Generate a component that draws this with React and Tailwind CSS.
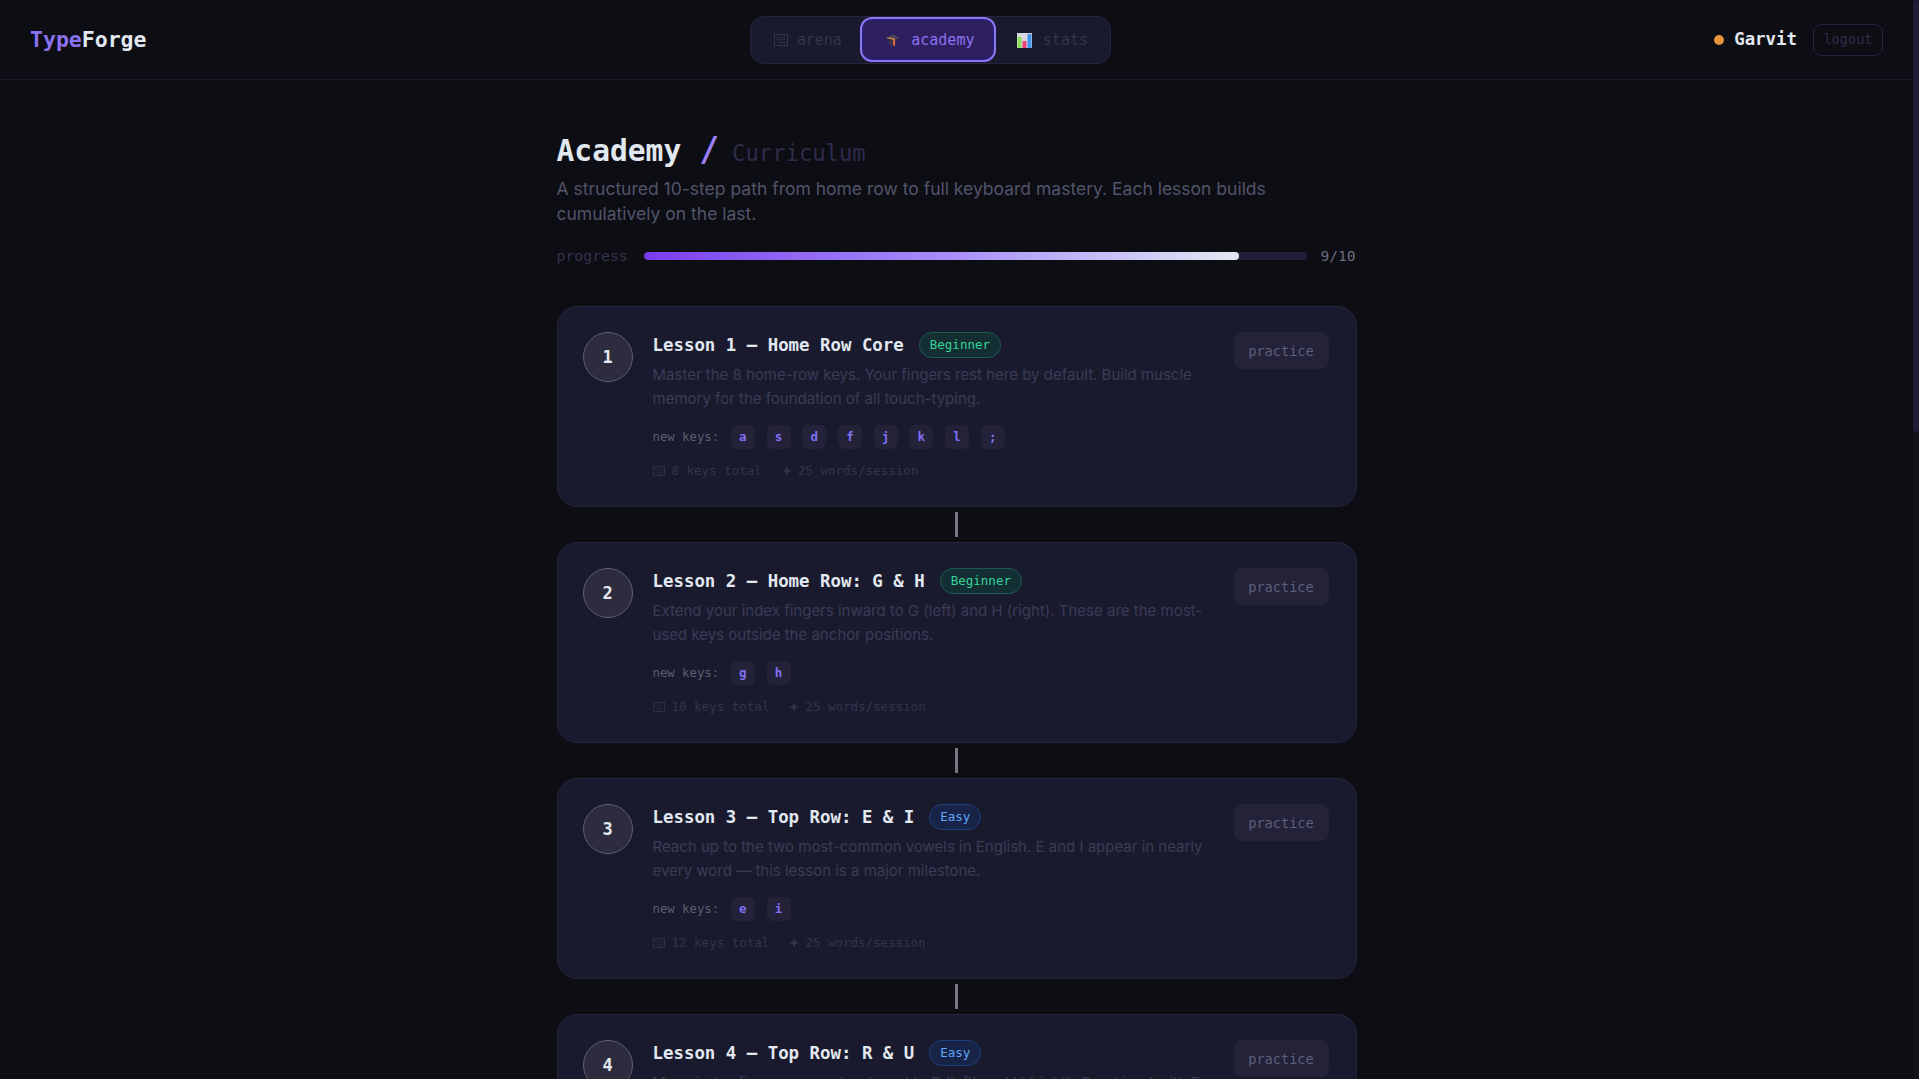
const mono = "font-['DejaVu_Sans_Mono','Liberation_Mono',monospace]";

const lessons = [
  { n: 1, title: "Lesson 1 — Home Row Core", level: "Beginner", desc: "Master the 8 home-row keys. Your fingers rest here by default. Build muscle memory for the foundation of all touch-typing.", keys: ["a", "s", "d", "f", "j", "k", "l", ";"], total: 8 },
  { n: 2, title: "Lesson 2 — Home Row: G & H", level: "Beginner", desc: "Extend your index fingers inward to G (left) and H (right). These are the most-used keys outside the anchor positions.", keys: ["g", "h"], total: 10 },
  { n: 3, title: "Lesson 3 — Top Row: E & I", level: "Easy", desc: "Reach up to the two most-common vowels in English. E and I appear in nearly every word — this lesson is a major milestone.", keys: ["e", "i"], total: 12 },
  { n: 4, title: "Lesson 4 — Top Row: R & U", level: "Easy", desc: "Move index fingers up-and-outward to R (left) and U (right). Combined with E and I, this unlocks many common words.", keys: ["r", "u"], total: 14 },
];

const levelStyles = {
  Beginner: "text-[#34d399] bg-[#142f33] border-[#1d5a50]",
  Easy: "text-[#60a5fa] bg-[#172448] border-[#1e3f78]",
};

function KeyboardIcon({ className }) {
  return (
    <svg viewBox="0 0 14 12" className={className} fill="none" stroke="currentColor">
      <rect x="0.5" y="0.5" width="13" height="11" strokeWidth="1" />
      <path d="M2 3.5h10M2 5.5h10" strokeWidth="1" strokeDasharray="1 1" />
      <path d="M4 8.5h7" strokeWidth="1" />
    </svg>
  );
}

function CapIcon() {
  return (
    <svg viewBox="0 0 14 14" className="w-[16px] h-[16px]">
      <path d="M1 5l6-3 6 3-6 2.5z" fill="#4a4458" />
      <path d="M3.5 7v3.5l3.5 1.5V7.5z" fill="#3a3548" />
      <path d="M2 5l6 1.2" stroke="#e8923a" strokeWidth="1" fill="none" />
      <path d="M8 6v6" stroke="#e8743a" strokeWidth="1.6" />
    </svg>
  );
}

function StatsIcon() {
  return (
    <svg viewBox="0 0 15 15" className="w-[15px] h-[15px]">
      <rect width="15" height="15" fill="#d8d8de" />
      <rect x="0.5" y="4" width="4" height="11" fill="#8fe35a" />
      <rect x="5.5" y="8" width="4" height="7" fill="#ee3f78" />
      <rect x="10.5" y="1" width="4" height="14" fill="#3f93e8" />
    </svg>
  );
}

function Lesson({ l }) {
  return (
    <div className="flex items-start gap-[20px] bg-[#1a1a2e] border border-[#25233f] rounded-[20px] pt-[25px] pl-[25px] pr-[27px] h-[201px]">
      <div className={`${mono} w-[50px] h-[50px] shrink-0 rounded-full bg-[#2c2c3e] border border-[#5e5e6e] flex items-center justify-center pt-[2px] text-[17px] font-bold text-[#e2e8f0]`}>
        {l.n}
      </div>
      <div className="flex-1 min-w-0">
        <div className="flex items-center gap-[15px] h-[26px]">
          <span className={`${mono} text-[17.4px] font-bold text-[#e2e8f0]`}>{l.title}</span>
          <span className={`${mono} ${levelStyles[l.level]} border rounded-full h-[26px] px-[10px] flex items-center text-[12.5px]`}>{l.level}</span>
        </div>
        <p className="font-['Inter',sans-serif] mt-[5px] text-[15px] leading-[24px] text-[#3b3b56]">{l.desc}</p>
        <div className="flex items-center gap-[11.7px] mt-[14px] h-[24px]">
          <span className={`${mono} text-[12.3px] text-[#5c5c72]`}>new keys:</span>
          {l.keys.map((k) => (
            <span key={k} className={`${mono} w-[24px] h-[24px] rounded-[6px] bg-[#232238] flex items-center justify-center text-[12.5px] font-bold text-[#8070f5]`}>{k}</span>
          ))}
        </div>
        <div className={`${mono} flex items-center gap-[20px] mt-[13px] text-[12.5px] text-[#34334c]`}>
          <span className="flex items-center gap-[7px]">
            <KeyboardIcon className="w-[12px] h-[10px]" />
            {l.total} keys total
          </span>
          <span className="flex items-center gap-[6px]">
            <svg viewBox="0 0 10 10" className="w-[10px] h-[10px]" fill="currentColor">
              <path d="M5 0l1.2 3.8L10 5 6.2 6.2 5 10 3.8 6.2 0 5l3.8-1.2z" />
            </svg>
            25 words/session
          </span>
        </div>
      </div>
      <button className={`${mono} shrink-0 w-[95px] h-[37px] pt-[2px] rounded-[8px] bg-[#232238] text-[13.6px] text-[#5f5f78]`}>practice</button>
    </div>
  );
}

export default function App() {
  return (
    <div className="flex h-screen overflow-hidden bg-[#0d0d14]">
      <div className="flex-1 min-w-0">
        <header className="bg-[#0d0d14] border-b border-[#1a1a2e] h-[80px] px-[30px] flex items-center justify-between">
          <div className={`${mono} text-[21.5px] font-bold pt-[1px]`}>
            <span className="text-[#8b72f0]">Type</span>
            <span className="text-[#e2e8f0]">Forge</span>
          </div>
          <nav className={`${mono} h-[48px] flex items-center gap-[4px] px-[5px] rounded-[14px] bg-[#1a1a2e] border border-[#25233f] text-[15px]`}>
            <button className="flex items-center gap-[9px] h-[44px] pt-[1px] pl-[18px] pr-[14px] text-[#34334c]">
              <KeyboardIcon className="w-[14px] h-[12px]" />
              arena
            </button>
            <button className="flex items-center gap-[10px] w-[136px] justify-center h-[45px] pt-[1px] pl-[4px] rounded-[12px] border-2 border-[#8b76f5] bg-[#2e1f5e] text-[#8b72f0] shadow-[inset_0_0_0_2px_#2a1f70]">
              <CapIcon />
              academy
            </button>
            <button className="flex items-center gap-[11px] h-[44px] pt-[1px] pl-[17px] pr-[17px] text-[#34334c]">
              <StatsIcon />
              stats
            </button>
          </nav>
          <div className="flex items-center">
            <span className="w-[10px] h-[10px] rounded-full bg-[#e8923a]"></span>
            <span className={`${mono} ml-[10px] text-[17.4px] font-bold text-[#e2e8f0]`}>Garvit</span>
            <button className={`${mono} ml-[16px] w-[70px] h-[32px] rounded-[8px] border border-[#25233f] text-[13.6px] text-[#2e2d48]`}>logout</button>
          </div>
        </header>
        <main className="w-[800px] mx-auto pt-[45px]">
          <h1 className={`${mono} flex items-baseline h-[46px] text-[29.6px] font-bold text-[#e2e8f0]`}>
            Academy
            <span className="ml-[18px] text-[33px] text-[#9a80f8]">/</span>
            <span className="ml-[13px] text-[22.2px] font-normal text-[#2e2b4a]">Curriculum</span>
          </h1>
          <p className="font-['Inter',sans-serif] mt-[5px] text-[17.5px] leading-[25px] text-[#52546a] w-[730px]">
            A structured 10-step path from home row to full keyboard mastery. Each lesson builds cumulatively on the last.
          </p>
          <div className={`${mono} flex items-center mt-[20px] h-[20px]`}>
            <span className="w-[87px] text-[14.8px] text-[#34334c]">progress</span>
            <div className="w-[663px] h-[8px] rounded-full bg-[#221f38] overflow-hidden">
              <div className="w-[595px] h-full rounded-full bg-gradient-to-r from-[#7c3aed] via-[#a78bfa] to-[#e2e8f0]"></div>
            </div>
            <span className="ml-[14px] text-[14.6px] text-[#6b6b80]">9/10</span>
          </div>
          <div className="mt-[40px] flex flex-col">
            {lessons.map((l, i) => (
              <div key={l.n}>
                {i > 0 && (
                  <div className="h-[35px] flex items-center justify-center">
                    <div className="w-[3px] h-[25px] bg-[#777783]"></div>
                  </div>
                )}
                <Lesson l={l} />
              </div>
            ))}
          </div>
        </main>
      </div>
      <aside className="w-[6px] shrink-0 bg-[#12121a]">
        <div className="h-[432px] rounded-[3px] bg-[#1f1d36]"></div>
      </aside>
    </div>
  );
}
